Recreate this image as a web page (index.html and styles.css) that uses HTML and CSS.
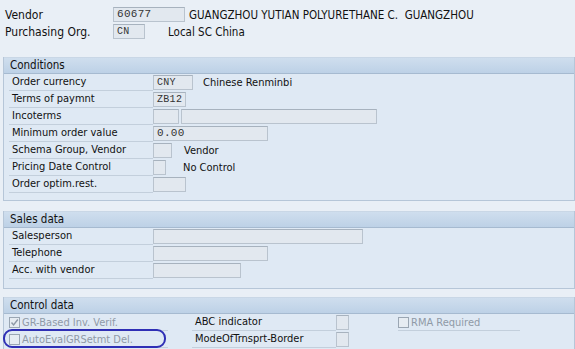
FILE: index.html
```html
<!DOCTYPE html>
<html>
<head>
<meta charset="utf-8">
<link rel="stylesheet" href="styles.css">
</head>
<body>
<div class="screen">
  <div class="top">
    <div class="row">
      <span class="tlabel">Vendor</span>
      <span class="field mono w72">60677</span>
      <span class="text vname">GUANGZHOU YUTIAN POLYURETHANE C.&nbsp;&nbsp;GUANGZHOU</span>
    </div>
    <div class="row">
      <span class="tlabel">Purchasing Org.</span>
      <span class="field mono w32 small">CN</span>
      <span class="text porg">Local SC China</span>
    </div>
  </div>

  <div class="panel cond">
    <div class="phead">Conditions</div>
    <div class="pbody">
      <div class="row"><span class="label">Order currency</span><span class="field mono w40 small">CNY</span><span class="text t10">Chinese Renminbi</span></div>
      <div class="row"><span class="label">Terms of paymnt</span><span class="field mono w33 small">ZB12</span></div>
      <div class="row"><span class="label">Incoterms</span><span class="field w26"></span><span class="field w196 ml2"></span></div>
      <div class="row"><span class="label">Minimum order value</span><span class="field mono w115">0.00</span></div>
      <div class="row"><span class="label">Schema Group, Vendor</span><span class="field w19"></span><span class="text t12">Vendor</span></div>
      <div class="row"><span class="label">Pricing Date Control</span><span class="field w13"></span><span class="text t17">No Control</span></div>
      <div class="row"><span class="label">Order optim.rest.</span><span class="field w33"></span></div>
    </div>
  </div>

  <div class="panel sales">
    <div class="phead">Sales data</div>
    <div class="pbody">
      <div class="row"><span class="label">Salesperson</span><span class="field w210"></span></div>
      <div class="row"><span class="label">Telephone</span><span class="field w115"></span></div>
      <div class="row"><span class="label">Acc. with vendor</span><span class="field w88"></span></div>
    </div>
  </div>

  <div class="panel ctrl">
    <div class="phead">Control data</div>
    <div class="pbody">
      <div class="row">
        <span class="check dis"><span class="box checked">
          <svg width="9" height="9" viewBox="0 0 9 9"><path d="M1.5 4.5 L3.6 7 L7.8 1.5" fill="none" stroke="#8d98a6" stroke-width="1.4"/></svg>
        </span>GR-Based Inv. Verif.</span>
        <span class="label c2">ABC indicator</span><span class="field w13"></span>
        <span class="check dis rma"><span class="box"></span>RMA Required</span>
      </div>
      <div class="row">
        <span class="check dis"><span class="box"></span>AutoEvalGRSetmt Del.</span>
        <span class="label c2">ModeOfTrnsprt-Border</span><span class="field w13"></span>
        <span class="oval"></span>
      </div>
      <div class="row"><span class="spacer"></span><span class="field w47"></span></div>
    </div>
  </div>
</div>
</body>
</html>
```

FILE: styles.css
```css
html, body {
  margin: 0;
  padding: 0;
}
body {
  width: 575px;
  height: 349px;
  overflow: hidden;
  background: #e9eff6;
  font-family: "DejaVu Sans Condensed", "Liberation Sans", Arial, sans-serif;
  font-stretch: condensed;
  font-size: 11px;
  color: #111;
}
.screen {
  position: relative;
}
.top {
  padding: 6px 0 0 5px;
  height: 51px;
}
.row {
  display: flex;
  align-items: center;
  height: 17px;
  position: relative;
}
.tlabel {
  width: 108px;
  font-size: 12px;
}
.top .text { font-size: 11.5px; }
.field {
  box-sizing: border-box;
  height: 15px;
  border: 1px solid #b9c3ce;
  border-top-color: #a7b2be;
  background: #e2e8ef;
  flex: none;
  line-height: 13px;
  padding-left: 3px;
  color: #333;
}
.mono {
  font-family: "Liberation Mono", "Courier New", monospace;
  font-stretch: normal;
  font-size: 11px;
  letter-spacing: 0.3px;
}
.small { font-size: 10px; }
.w72 { width: 72px; }
.w32 { width: 32px; }
.w40 { width: 40px; }
.w33 { width: 33px; }
.w26 { width: 26px; }
.w196 { width: 196px; }
.w115 { width: 115px; }
.w19 { width: 19px; }
.w13 { width: 13px; }
.w210 { width: 210px; }
.w88 { width: 88px; }
.w47 { width: 47px; }
.ml2 { margin-left: 2px; }
.text { white-space: nowrap; }
.vname { margin-left: 4px; }
.porg { margin-left: 23px; }
.t10 { margin-left: 10px; }
.t12 { margin-left: 12px; }
.t17 { margin-left: 17px; }

.panel {
  margin-left: 3px;
  width: 570px;
  border: 1px solid #b6c6d8;
  border-top: none;
  background: #dfe9f4;
}
.phead {
  height: 15px;
  line-height: 15px;
  padding-left: 6px;
  font-size: 11.5px;
  background: linear-gradient(#cfdeee, #bdd1e6);
  border-top: 1px solid #c9d7e6;
  border-bottom: 1px solid #a6bad0;
  color: #111;
}
.pbody {
  padding: 0 0 0 5px;
}
.cond .pbody { padding-bottom: 7px; }
.sales { margin-top: 10px; }
.sales .pbody { padding-bottom: 9px; }
.ctrl { margin-top: 8px; border-bottom: none; }

.label {
  box-sizing: border-box;
  width: 144px;
  height: 17px;
  line-height: 16px;
  padding-left: 3px;
  border-bottom: 1px solid #c3cfdc;
  white-space: nowrap;
  flex: none;
}
.label.c2 {
  margin-left: 24px;
}
.check {
  box-sizing: border-box;
  display: flex;
  align-items: center;
  width: 159px;
  height: 17px;
  border-bottom: 1px solid #c3cfdc;
  white-space: nowrap;
  flex: none;
}
.check.dis { color: #8f9aa7; }
.box {
  box-sizing: border-box;
  width: 11px;
  height: 11px;
  border: 1px solid #9aa6b3;
  background: #e6ecf2;
  margin-right: 2px;
  display: flex;
  align-items: center;
  justify-content: center;
}
.rma {
  width: 122px;
  margin-left: 49px;
}
.spacer { width: 327px; flex: none; }
.oval {
  position: absolute;
  left: -6px;
  top: -2px;
  width: 163px;
  height: 19px;
  border: 2px solid #2f2fb5;
  border-radius: 9px;
  box-sizing: border-box;
}
```
